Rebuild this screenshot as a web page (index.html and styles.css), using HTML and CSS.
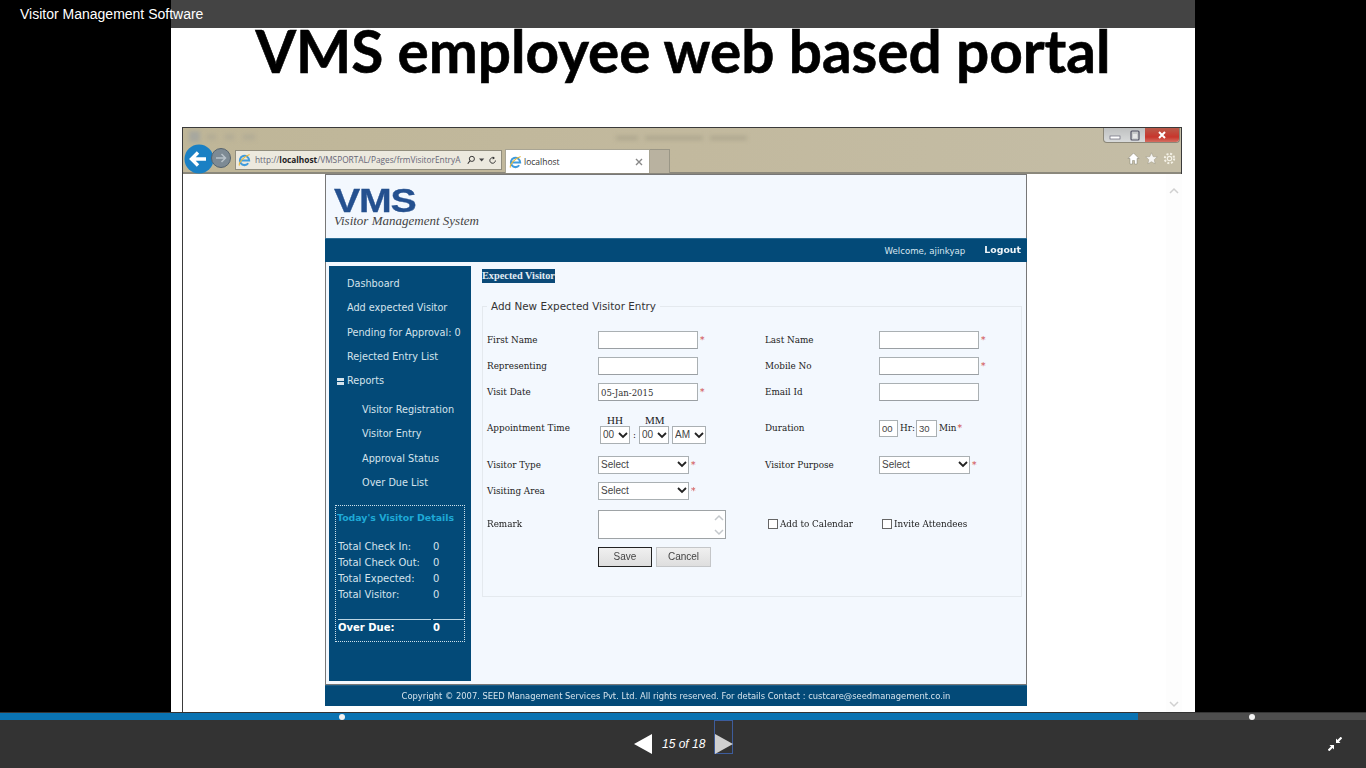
FILE: index.html
```html
<!DOCTYPE html>
<html lang="en">
<head>
<meta charset="utf-8">
<title>VMS employee web based portal</title>
<link rel="stylesheet" href="styles.css">
</head>
<body>
<div class="viewer">
  <div class="doc-title">Visitor Management Software</div>
  <main class="slide">
    <div class="slide-bar"></div>
    <h1 class="slide-heading">VMS employee web based portal</h1>
    <section class="browser">
      <div class="chrome">
        <div class="win-row">
          <svg class="title-smudge" width="600" height="16" viewBox="0 0 600 16"><rect x="6" y="3" width="11" height="11" fill="#8f9aa6" opacity=".5"/><rect x="24" y="6" width="9" height="6" fill="#a8a494" opacity=".5"/><rect x="42" y="6" width="9" height="6" fill="#a8a494" opacity=".5"/><rect x="60" y="6" width="12" height="6" fill="#a8a494" opacity=".5"/><rect x="433" y="8" width="22" height="4" fill="#908c78" opacity=".4"/><rect x="462" y="8" width="58" height="4" fill="#908c78" opacity=".4"/><rect x="527" y="8" width="37" height="4" fill="#908c78" opacity=".4"/></svg>
          <div class="win-buttons">
            <span class="win-btn"><svg width="22" height="15" viewBox="0 0 22 15"><rect x="6" y="8" width="10" height="3" fill="#fff" stroke="#667" stroke-width=".7"/></svg></span>
            <span class="win-btn"><svg width="19" height="15" viewBox="0 0 19 15"><rect x="5" y="3" width="8" height="9" rx="1" fill="none" stroke="#556" stroke-width="1.200"/><rect x="7" y="6" width="4" height="4" fill="#e8e8e8"/></svg></span>
            <span class="win-btn win-close"><svg width="34" height="15" viewBox="0 0 34 15"><path d="M14 4l6 6M20 4l-6 6" stroke="#fff" stroke-width="2"/></svg></span>
          </div>
        </div>
        <div class="tool-row">
          <svg class="nav-back" width="30" height="30" viewBox="0 0 30 30"><circle cx="15" cy="15" r="14.500" fill="#1a80c4"/><path d="M8 15h14M14 8.500L7.500 15l6.500 6.500" fill="none" stroke="#fff" stroke-width="3.400"/></svg>
          <svg class="nav-forward" width="20" height="20" viewBox="0 0 20 20"><circle cx="10" cy="10" r="9.500" fill="#7d8a94" stroke="#56636e"/><path d="M5 10h9M10.500 6l4 4-4 4" fill="none" stroke="#b8c2c9" stroke-width="1.500"/></svg>
          <div class="address">
            <svg class="ie" width="13" height="14" viewBox="0 0 14 14"><path d="M2.500 7.500h9.500A5 5 0 1 0 11 10.500" fill="none" stroke="#3f9bdc" stroke-width="2.200"/><path d="M1.500 13C.5 10 6 3 12.500 1" fill="none" stroke="#e8b93c" stroke-width="1.200"/></svg>
            <span class="url">http://<b>localhost</b>/VMSPORTAL/Pages/frmVisitorEntryA</span>
            <svg width="11" height="12" viewBox="0 0 11 12"><circle cx="6.500" cy="4.500" r="3.400" fill="none" stroke="#333" stroke-width="1.300"/><path d="M4 7l-3 4" stroke="#333" stroke-width="1.500"/></svg>
            <svg width="7" height="4" viewBox="0 0 7 4"><path d="M0 0h7L3.500 4z" fill="#444"/></svg>
            <svg width="10" height="11" viewBox="0 0 10 11"><path d="M8.500 5.500A3.700 3.700 0 1 1 6.500 2.200" fill="none" stroke="#333" stroke-width="1.300"/><path d="M5 0l3 2-3 2z" fill="#333"/></svg>
          </div>
          <div class="tab">
            <svg class="ie" width="13" height="14" viewBox="0 0 14 14"><path d="M2.500 7.500h9.500A5 5 0 1 0 11 10.500" fill="none" stroke="#3f9bdc" stroke-width="2.200"/><path d="M1.500 13C.5 10 6 3 12.500 1" fill="none" stroke="#e8b93c" stroke-width="1.200"/></svg>
            <span class="tab-name">localhost</span>
            <svg width="8" height="8" viewBox="0 0 8 8"><path d="M1 1l6 6M7 1L1 7" stroke="#888" stroke-width="1.400"/></svg>
          </div>
          <div class="new-tab"></div>
          <div class="tools">
            <svg width="13" height="13" viewBox="0 0 13 13"><path d="M6.500 1L1 6.500h2V12h2.500V8.500h2V12H10V6.500h2z" fill="#fff" stroke="#6d6a5c" stroke-width=".4"/></svg>
            <svg width="13" height="13" viewBox="0 0 13 13"><path d="M6.500 .8l1.700 3.800 4 .4-3 2.700.9 4.100-3.600-2.100-3.600 2.100.9-4.100-3-2.700 4-.4z" fill="#fff" fill-opacity=".85" stroke="#8a8674" stroke-width=".4"/></svg>
            <svg width="13" height="13" viewBox="0 0 13 13"><circle cx="6.500" cy="6.500" r="2.200" fill="none" stroke="#f4f1e6" stroke-width="1.200"/><circle cx="6.500" cy="6.500" r="4.700" fill="none" stroke="#f4f1e6" stroke-width="2" stroke-dasharray="2 1.700"/></svg>
          </div>
        </div>
      </div>
      <div class="viewport">
        <div class="page">
          <header class="page-head">
            <div class="logo">VMS</div>
            <div class="logo-sub">Visitor Management System</div>
          </header>
          <div class="welcome">
            <span class="welcome-user">Welcome, ajinkyap</span>
            <a class="logout">Logout</a>
          </div>
          <div class="page-body">
            <aside class="side">
              <nav class="side-nav">
                <a>Dashboard</a>
                <a>Add expected Visitor</a>
                <a>Pending for Approval: 0</a>
                <a>Rejected Entry List</a>
                <a class="side-group"><span class="minus"></span>Reports</a>
              </nav>
              <nav class="side-sub">
                <a>Visitor Registration</a>
                <a>Visitor Entry</a>
                <a>Approval Status</a>
                <a>Over Due List</a>
              </nav>
              <div class="today">
                <div class="today-title">Today's Visitor Details</div>
                <dl class="today-list">
                  <dt>Total Check In:</dt><dd>0</dd>
                  <dt>Total Check Out:</dt><dd>0</dd>
                  <dt>Total Expected:</dt><dd>0</dd>
                  <dt>Total Visitor:</dt><dd>0</dd>
                </dl>
                <div class="today-rule"><span></span><span></span></div>
                <dl class="today-list today-total">
                  <dt>Over Due:</dt><dd>0</dd>
                </dl>
              </div>
            </aside>
            <div class="content">
              <div class="crumb"><span>Expected Visitor</span></div>
              <fieldset class="entry">
                <legend>Add New Expected Visitor Entry</legend>
                <div class="form-grid">
                  <label>First Name</label>
                  <div class="field"><input class="text"><i>*</i></div>
                  <label>Last Name</label>
                  <div class="field"><input class="text"><i>*</i></div>

                  <label>Representing</label>
                  <div class="field"><input class="text"></div>
                  <label>Mobile No</label>
                  <div class="field"><input class="text"><i>*</i></div>

                  <label>Visit Date</label>
                  <div class="field"><input class="text" value="05-Jan-2015"><i>*</i></div>
                  <label>Email Id</label>
                  <div class="field"><input class="text"></div>

                  <label>Appointment Time</label>
                  <div class="time">
                    <div class="time-heads"><span>HH</span><span>MM</span></div>
                    <div class="time-selects">
                      <select class="pick pick-sm"><option>00</option></select>
                      <span class="colon">:</span>
                      <select class="pick pick-sm"><option>00</option></select>
                      <select class="pick pick-am"><option>AM</option></select>
                    </div>
                  </div>
                  <label>Duration</label>
                  <div class="field duration">
                    <input class="mini" value="00"><span>Hr:</span><input class="mini mini-wide" value="30"><span>Min</span><i>*</i>
                  </div>

                  <label>Visitor Type</label>
                  <div class="field"><select class="pick"><option>Select</option></select><i>*</i></div>
                  <label>Visitor Purpose</label>
                  <div class="field"><select class="pick"><option>Select</option></select><i>*</i></div>

                  <label>Visiting Area</label>
                  <div class="field"><select class="pick"><option>Select</option></select><i>*</i></div>
                  <span></span><span></span>

                  <label>Remark</label>
                  <div class="field remark">
                    <textarea></textarea>
                    <svg class="remark-arrows" width="10" height="24" viewBox="0 0 10 24"><path d="M1 7l4-4 4 4M1 17l4 4 4-4" fill="none" stroke="#c4c8cc" stroke-width="1.500"/></svg>
                  </div>
                  <label class="check"><input type="checkbox">Add to Calendar</label>
                  <label class="check"><input type="checkbox">Invite Attendees</label>

                  <span></span>
                  <div class="actions">
                    <button class="btn btn-primary">Save</button>
                    <button class="btn">Cancel</button>
                  </div>
                </div>
              </fieldset>
            </div>
          </div>
          <footer class="page-foot">Copyright © 2007. SEED Management Services Pvt. Ltd. All rights reserved. For details Contact : custcare@seedmanagement.co.in</footer>
        </div>
        <div class="scroller">
          <svg width="10" height="7" viewBox="0 0 10 7"><path d="M1 6l4-4 4 4" fill="none" stroke="#d0d0d0" stroke-width="1.500"/></svg>
          <svg width="10" height="7" viewBox="0 0 10 7"><path d="M1 1l4 4 4-4" fill="none" stroke="#d0d0d0" stroke-width="1.500"/></svg>
        </div>
      </div>
    </section>
  </main>
  <div class="player">
    <div class="track">
      <div class="track-fill"></div>
      <span class="dot dot-a"></span>
      <span class="dot dot-b"></span>
    </div>
    <div class="pager">
      <svg class="prev" width="18" height="20" viewBox="0 0 18 20"><path d="M18 0v20L0 10z" fill="#fff"/></svg>
      <span class="count">15 of 18</span>
      <span class="next"><svg width="18" height="20" viewBox="0 0 18 20"><path d="M0 0v20l18-10z" fill="#d0d0d0"/></svg></span>
    </div>
    <svg class="shrink" width="14" height="14" viewBox="0 0 14 14"><path d="M13.500 .5L9.500 4.500M.5 13.500l4-4" fill="none" stroke="#fff" stroke-width="2.200"/><path d="M8 1.500V6h4.500zM6 12.500V8H1.500z" fill="#fff"/></svg>
  </div>
</div>
</body>
</html>
```

FILE: styles.css
```css
* { box-sizing: border-box; }
html, body { margin: 0; height: 100%; background: #000; overflow: hidden; }
.viewer { position: relative; width: 1366px; height: 768px; display: flex; flex-direction: column; }

.doc-title { position: absolute; left: 20px; top: 6px; z-index: 2; color: #fff; font: 14px/16px "Liberation Sans", Arial, sans-serif; }

.slide { width: 1024px; height: 712px; margin-left: 171px; background: #fff; overflow: hidden; flex: none; }
.slide-bar { height: 28px; background: #444; }
.slide-heading { margin: 0; height: 99px; text-align: center; color: #000; font: 700 58.500px/44px Lato, sans-serif; -webkit-text-stroke: .6px #000; white-space: nowrap; }

.browser { width: 1000px; height: 585px; margin-left: 11px; border: 1px solid #3a3a3a; border-bottom: 0; filter: blur(.4px); }
.chrome { height: 46px; background: linear-gradient(90deg, #bfb698, #c2b99e 50%, #c4bda6); border-bottom: 2px solid #8b887c; }
.win-row { height: 16px; display: flex; justify-content: space-between; padding-right: 1px; }
.title-smudge { display: block; filter: blur(2px); }
.win-buttons { display: flex; height: 15px; border: 1px solid #8b8778; border-top: 0; border-radius: 0 0 4px 4px; overflow: hidden; background: linear-gradient(#bfc1c1, #d8dada); }
.win-btn { display: block; height: 15px; line-height: 0; }
.win-close { background: linear-gradient(#b95a4a, #c8352c 60%, #d77a6c); }
.tool-row { height: 28px; display: flex; align-items: flex-start; padding-left: 1px; }
.nav-back { flex: none; }
.nav-forward { flex: none; margin: 4px 0 0 -3px; }
.address { width: 267px; height: 20px; margin: 6px 0 0 4px; display: flex; align-items: center; gap: 4px; padding: 0 5px 0 2px; background: #ece9de; border: 1px solid #918d7d; font: 8.300px/12px "Open Sans", sans-serif; color: #667; white-space: nowrap; overflow: hidden; }
.ie { flex: none; }
.url { width: 208px; flex: none; }
.url b { color: #222; }
.tab { width: 145px; height: 24px; margin: 5px 0 0 3px; display: flex; align-items: center; gap: 2px; padding: 0 6px 0 3px; background: #fff; border: 1px solid #a9a594; border-bottom: 0; font: 8.500px/12px "Open Sans", sans-serif; color: #333; }
.tab-name { flex: 1; }
.new-tab { width: 20px; height: 24px; margin-top: 5px; background: #b9b2a0; border: 1px solid #9a9686; border-left: 0; border-bottom: 0; }
.tools { margin: 8px 0 0 auto; display: flex; gap: 5px; padding-right: 5px; line-height: 0; }

.viewport { height: 538px; display: flex; background: #fff; padding-left: 142px; position: relative; }
.page { width: 702px; flex: none; }
.page-head { height: 64px; padding: 13px 0 0 8px; background: #f3f8fe; border: 1px solid #777; border-bottom: 0; }
.logo { height: 25px; color: #24508f; font: 700 33px/25px "Liberation Sans", sans-serif; transform-origin: left; transform: scaleX(1.190); letter-spacing: -1px; -webkit-text-stroke: .3px #24508f; }
.logo-sub { margin-top: 1px; color: #444; font: italic 13px/14px "Liberation Serif", serif; }
.welcome { height: 24px; display: flex; align-items: center; justify-content: flex-end; gap: 19px; padding-right: 6px; background: #034a78; color: #d8e6f0; border-top: 1px solid #2b6c94; font: 8.600px/12px "DejaVu Sans", sans-serif; }
.logout { color: #eef4f8; font: 700 9.400px/12px "DejaVu Sans", sans-serif; position: relative; top: -1px; }

.page-body { height: 423px; display: flex; padding: 4px 4px 4px 3px; background: #f3f8fe; border: 1px solid #777; border-top: 0; }
.side { width: 142px; height: 415px; flex: none; background: #034a78; color: #d5e3ec; font: 9.700px/14px "DejaVu Sans", sans-serif; padding-left: 18px; }
.side a { display: block; white-space: nowrap; }
.side-nav { padding-top: 11px; display: flex; flex-direction: column; gap: 10.300px; }
.side-group { display: flex !important; align-items: center; gap: 3px; margin-left: -10px; }
.minus { display: block; width: 7px; height: 7px; background: #034a78; border-top: 3px solid #d5e3ec; border-bottom: 3px solid #d5e3ec; }
.side-sub { padding: 15px 0 0 15px; display: flex; flex-direction: column; gap: 10.300px; }

.today { width: 130px; height: 137px; margin: 15px 0 0 -12px; padding: 5px 0 0 1px; border: 1px dotted #cfe0ea; font-size: 10px; }
.today-title { color: #1ea9d6; font: 700 9.400px/14px "DejaVu Sans", sans-serif; white-space: nowrap; }
.today-list { margin: 15px 0 0 1px; display: grid; grid-template-columns: 95px 1fr; row-gap: 2px; }
.today-list dt, .today-list dd { margin: 0; }
.today-rule { display: grid; grid-template-columns: 93px 32px; gap: 2px; margin: 17px 0 0 1px; }
.today-rule span { display: block; height: 1px; background: #bcd6e4; }
.today-total { margin-top: 1px; color: #fff; font-weight: 700; }

.content { flex: 1; padding-left: 11px; }
.crumb { height: 33px; padding-top: 3px; font: 700 10.300px/14px "Liberation Serif", serif; }
.crumb span { display: inline-block; background: #0b4a78; color: #e4eef5; white-space: nowrap; }
.entry { margin: 0; width: 540px; height: 298px; padding: 0 0 0 4px; border: 1px solid #e4e9ee; min-inline-size: 0; }
.entry legend { margin-left: 0; padding: 0 4px; color: #333; font: 10.400px/14px "DejaVu Sans", sans-serif; }

.form-grid { display: grid; margin-top: 14px; grid-template-columns: 111px 167px 114px 140px; grid-template-rows: 26px 26px 26px 46px 27px 25px 42px 24px; align-items: center; color: #222; font: 9.800px/14px "DejaVu Serif Condensed", "DejaVu Serif", serif; }
.form-grid label { white-space: nowrap; }
.field { display: flex; align-items: center; gap: 2px; white-space: nowrap; }
.field i { color: #d04a4a; font-style: normal; font-size: 10px; }
.text { width: 100px; height: 18px; padding: 0 2px; border: 1px solid #aab0b3; border-bottom-color: #9a9fa3; background: #fff; color: #333; font: 9.500px/14px "DejaVu Serif Condensed", serif; border-radius: 0; }
.pick { width: 91px; height: 18px; padding: 0 2px; border: 1px solid #aab0b3; border-radius: 0; appearance: none; background: #fff url("data:image/svg+xml,%3Csvg xmlns='http://www.w3.org/2000/svg' width='10' height='7'%3E%3Cpath d='M1 1l4 4 4-4' fill='none' stroke='%23222' stroke-width='1.800'/%3E%3C/svg%3E") no-repeat right 1px center; color: #444; font: 10px/14px "Liberation Sans", sans-serif; }
.pick-sm { width: 30px; }
.pick-am { width: 34px; margin-left: 3px; }
.time { display: flex; flex-direction: column; margin: 2px 0 0 2px; }
.time-heads { display: flex; height: 12px; padding-left: 7px; gap: 22px; font-family: "Liberation Serif", serif; font-size: 11px; line-height: 12px; }
.time-selects { display: flex; align-items: center; }
.colon { width: 9px; text-align: center; }
.duration { gap: 0; }
.duration span { margin: 0 1px 0 2px; }
.mini { width: 19px; height: 17px; padding: 0 2px; border: 1px solid #aab0b3; background: #fff; color: #444; font: 9.500px/14px "Liberation Sans", sans-serif; }
.mini-wide { width: 21px; }
.remark { position: relative; }
.remark textarea { display: block; width: 128px; height: 29px; border: 1px solid #9ea3a6; border-radius: 0; resize: none; background: #fff; margin: 0; padding: 0; overflow: hidden; }
.remark-arrows { position: absolute; left: 116px; top: 3px; }
.form-grid .check { display: flex; align-items: center; gap: 2px; margin-left: 3px; }
.check input { width: 10px; height: 10px; margin: 0; appearance: none; background: #fff; border: 1px solid #666; }
.actions { display: flex; gap: 4px; grid-column: 2 / span 3; }
.btn { width: 55px; height: 20px; padding: 0; background: linear-gradient(#f0f0f0, #dedede); border: 1px solid #c4c6c8; border-radius: 0; color: #444; font: 10px/14px "Liberation Sans", sans-serif; }
.btn-primary { width: 54px; border-color: #222; }

.page-foot { height: 21px; background: #034a78; color: #d5e3ec; text-align: center; font: 8.350px/21px "DejaVu Sans", sans-serif; white-space: nowrap; border-top: 1px solid #1c5e88; }
.scroller { width: 16px; height: 538px; margin-left: 139px; padding: 13px 3px 4px; display: flex; flex-direction: column; justify-content: space-between; background: #fdfdfd; }

.player { position: relative; height: 56px; background: #333; flex: none; }
.track { position: relative; height: 7px; margin-top: 1px; background: #4d4d4d; }
.track-fill { width: 1138px; height: 7px; background: #0a73b2; }
.dot { position: absolute; top: 1px; width: 6px; height: 6px; border-radius: 50%; background: #f2f2f2; }
.dot-a { left: 339px; }
.dot-b { left: 1249px; }
.pager { display: flex; justify-content: center; align-items: flex-end; position: absolute; left: 634px; top: 8px; }
.prev { display: block; }
.count { width: 81px; height: 20px; padding-left: 10px; color: #fff; font: italic 12px/21px "Liberation Sans", Arial, sans-serif; white-space: nowrap; }
.next { display: block; width: 19px; height: 34px; border: 1px solid #3d5c9c; padding-top: 13px; line-height: 0; margin-left: -19px; }
.shrink { position: absolute; left: 1328px; top: 25px; }
```
